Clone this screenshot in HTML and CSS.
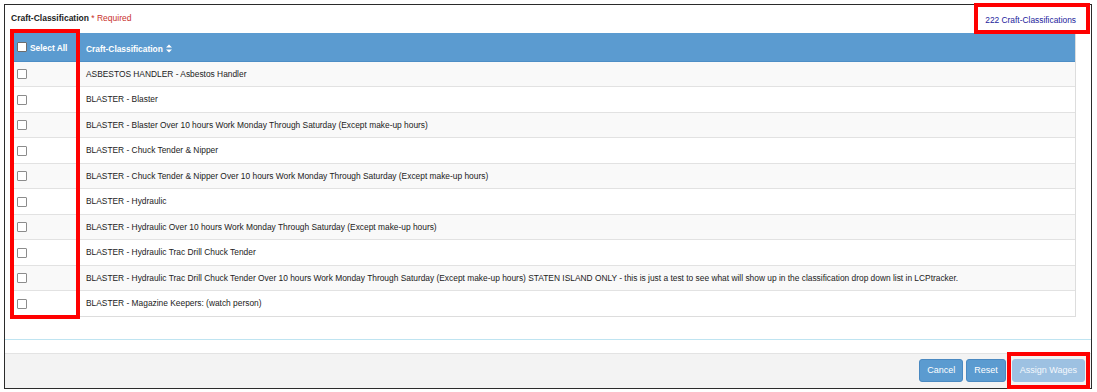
FILE: index.html
```html
<!DOCTYPE html>
<html>
<head>
<meta charset="utf-8">
<link rel="stylesheet" href="styles.css">
</head>
<body>
<div class="frame">
  <div class="head">
    <div class="title"><b>Craft-Classification</b> <span class="req">* Required</span></div>
    <a class="count">222 Craft-Classifications</a>
  </div>
  <div class="tablewrap">
    <table class="grid">
      <thead>
        <tr>
          <th class="c1"><span class="cb hdr"></span>Select All</th>
          <th class="c2">Craft-Classification <svg class="sort" width="6" height="9" viewBox="0 0 6 9"><path d="M0 3.6 3 0.4 6 3.6Z M0 5.4 3 8.6 6 5.4Z" fill="#fff"/></svg></th>
        </tr>
      </thead>
      <tbody>
        <tr><td class="c1"><span class="cb"></span></td><td>ASBESTOS HANDLER - Asbestos Handler</td></tr>
        <tr><td class="c1"><span class="cb"></span></td><td>BLASTER - Blaster</td></tr>
        <tr><td class="c1"><span class="cb"></span></td><td>BLASTER - Blaster Over 10 hours Work Monday Through Saturday (Except make-up hours)</td></tr>
        <tr><td class="c1"><span class="cb"></span></td><td>BLASTER - Chuck Tender &amp; Nipper</td></tr>
        <tr><td class="c1"><span class="cb"></span></td><td>BLASTER - Chuck Tender &amp; Nipper Over 10 hours Work Monday Through Saturday (Except make-up hours)</td></tr>
        <tr><td class="c1"><span class="cb"></span></td><td>BLASTER - Hydraulic</td></tr>
        <tr><td class="c1"><span class="cb"></span></td><td>BLASTER - Hydraulic Over 10 hours Work Monday Through Saturday (Except make-up hours)</td></tr>
        <tr><td class="c1"><span class="cb"></span></td><td>BLASTER - Hydraulic Trac Drill Chuck Tender</td></tr>
        <tr><td class="c1"><span class="cb"></span></td><td>BLASTER - Hydraulic Trac Drill Chuck Tender Over 10 hours Work Monday Through Saturday (Except make-up hours) STATEN ISLAND ONLY - this is just a test to see what will show up in the classification drop down list in LCPtracker.</td></tr>
        <tr><td class="c1"><span class="cb"></span></td><td>BLASTER - Magazine Keepers: (watch person)</td></tr>
      </tbody>
    </table>
  </div>
  <div class="spacer"></div>
  <div class="sep"></div>
  <div class="footer">
    <button class="btn">Cancel</button>
    <button class="btn">Reset</button>
    <button class="btn disabled">Assign Wages</button>
  </div>
</div>
<div class="mark mark-select"></div>
<div class="mark mark-count"></div>
<div class="mark mark-assign"></div>
</body>
</html>
```

FILE: styles.css
```css
html, body {
  margin: 0;
  padding: 0;
  background: #fff;
}
body {
  font-family: "Liberation Sans", Arial, sans-serif;
  font-size: 8.4px;
  color: #222;
  position: relative;
  width: 1097px;
  height: 392px;
  overflow: hidden;
}
.frame {
  position: absolute;
  left: 4px;
  top: 4px;
  width: 1086px;
  height: 383px;
  border: 1px solid #2b2b2b;
  display: flex;
  flex-direction: column;
  background: #fff;
}
.head {
  height: 28px;
  display: flex;
  justify-content: space-between;
  align-items: center;
  padding: 0 15px 0 6px;
}
.title {
  font-size: 8.5px;
  color: #222;
  margin-top: -2px;
}
.req {
  color: #c9302c;
}
.count {
  color: #23239c;
  font-size: 8.4px;
  margin-top: 1px;
}
.tablewrap {
  margin: 0 15px 0 7px;
  border: 1px solid #ddd;
  border-top: none;
}
.grid {
  width: 100%;
  border-collapse: collapse;
}
.grid th {
  box-sizing: border-box;
  background: #5b9bd0;
  color: #fff;
  font-weight: bold;
  text-align: left;
  height: 28px;
  padding: 0;
  border-bottom: 1px solid #4d8ec6;
}
.grid th.c1 {
  width: 66px;
  padding-left: 4px;
  vertical-align: top;
  padding-top: 8px;
}
.grid th.c2 {
  padding-left: 7px;
  padding-top: 5px;
}
.sort {
  vertical-align: -1px;
  margin-left: 1px;
}
.grid td {
  padding: 0 0 0 7px;
  border-top: 1px solid #e2e2e2;
  color: #222;
  white-space: nowrap;
}
.grid td.c1 {
  padding-left: 4px;
}
.grid tbody tr:nth-child(odd) td {
  background: #f9f9f9;
}
.grid tbody tr:first-child td {
  border-top: none;
}
.grid tbody tr td {
  height: 24.5px;
}
.cb {
  display: inline-block;
  width: 8px;
  height: 8px;
  border: 1px solid #8c8c8c;
  border-radius: 1px;
  background: #fff;
  vertical-align: middle;
  margin-top: 1px;
}
.cb.hdr {
  border-color: #6d6d6d;
  margin-right: 3px;
  vertical-align: -1px;
}
.spacer {
  height: 22px;
}
.sep {
  height: 1px;
  background: #bfe4f1;
}
.spacer + .sep {
  margin-bottom: 13px;
}
.footer {
  flex: 1;
  background: #f3f3f3;
  border-top: 1px solid #e3e3e3;
  display: flex;
  justify-content: flex-end;
  align-items: center;
  gap: 3px;
  padding-right: 6px;
}
.btn {
  font-family: "Liberation Sans", Arial, sans-serif;
  font-size: 9px;
  color: #fff;
  background: #5b9bd0;
  border: 1px solid #4a89c1;
  border-radius: 3px;
  height: 23px;
  padding: 0 7px;
  margin-top: -1px;
}
.btn.disabled {
  background: #9dc1e2;
  border-color: #9dc1e2;
  color: #f4f8fc;
  margin-left: 3px;
  padding: 0 7px;
}
.mark {
  position: absolute;
  border: 4px solid #f00;
  box-sizing: border-box;
}
.mark-select {
  left: 10px;
  top: 29px;
  width: 70px;
  height: 290px;
}
.mark-count {
  left: 974px;
  top: 3px;
  width: 116px;
  height: 31px;
}
.mark-assign {
  left: 1007px;
  top: 352px;
  width: 83px;
  height: 37px;
}
```
